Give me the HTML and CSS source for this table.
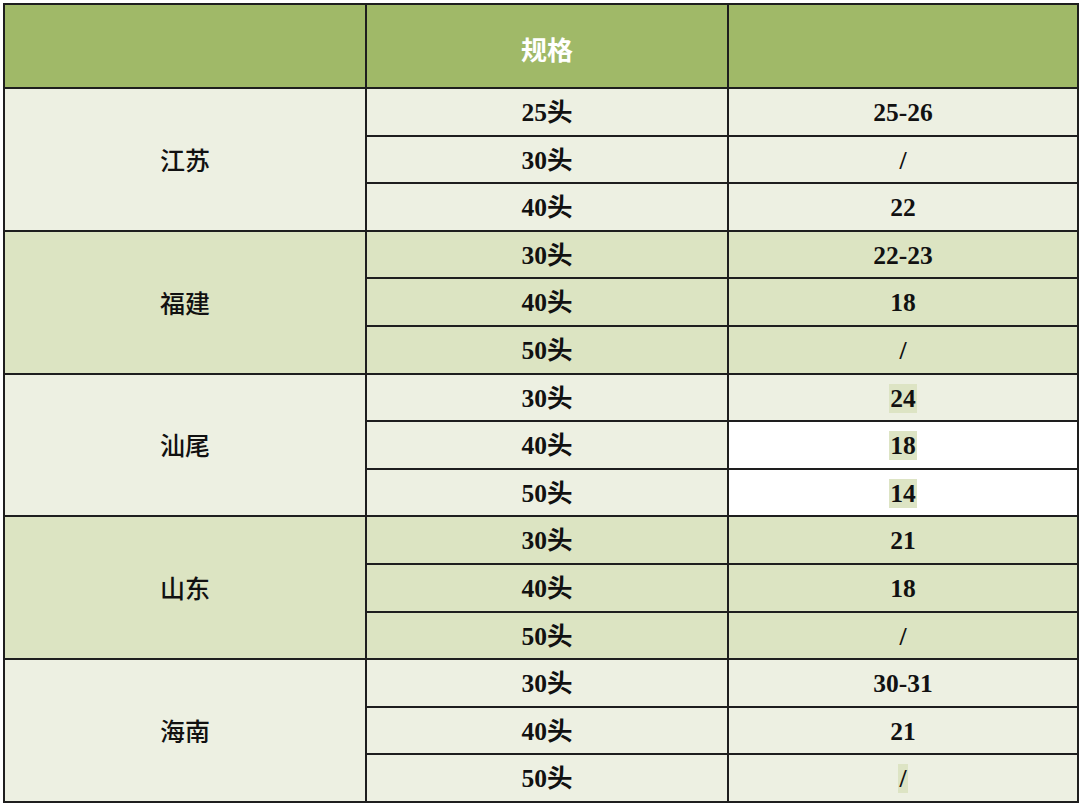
FILE: index.html
```html
<!DOCTYPE html>
<html lang="zh">
<head>
<meta charset="utf-8">
<link rel="stylesheet" href="styles.css">
</head>
<body>
<table class="spec">
  <colgroup><col class="c1"><col class="c2"><col class="c3"></colgroup>
  <thead>
    <tr class="head"><th></th><th>规格</th><th></th></tr>
  </thead>
  <tbody class="light">
    <tr><td rowspan="3" class="region">江苏</td><td>25头</td><td>25-26</td></tr>
    <tr><td>30头</td><td>/</td></tr>
    <tr><td>40头</td><td>22</td></tr>
  </tbody>
  <tbody class="dark">
    <tr><td rowspan="3" class="region">福建</td><td>30头</td><td>22-23</td></tr>
    <tr><td>40头</td><td>18</td></tr>
    <tr><td>50头</td><td>/</td></tr>
  </tbody>
  <tbody class="light">
    <tr><td rowspan="3" class="region">汕尾</td><td>30头</td><td><span class="hl">24</span></td></tr>
    <tr><td>40头</td><td class="white"><span class="hl">18</span></td></tr>
    <tr><td>50头</td><td class="white"><span class="hl">14</span></td></tr>
  </tbody>
  <tbody class="dark">
    <tr><td rowspan="3" class="region">山东</td><td>30头</td><td>21</td></tr>
    <tr><td>40头</td><td>18</td></tr>
    <tr><td>50头</td><td>/</td></tr>
  </tbody>
  <tbody class="light">
    <tr><td rowspan="3" class="region">海南</td><td>30头</td><td>30-31</td></tr>
    <tr><td>40头</td><td>21</td></tr>
    <tr><td>50头</td><td><span class="hl">/</span></td></tr>
  </tbody>
</table>
</body>
</html>
```
FILE: styles.css
```css
html, body {
  margin: 0;
  padding: 0;
  background: #ffffff;
}

.spec {
  margin: 3px 0 0 3px;
  width: 1074px;
  border-collapse: collapse;
  table-layout: fixed;
  font-family: "Liberation Serif", "Noto Sans CJK SC", serif;
  font-weight: bold;
  font-size: 25.5px;
  color: #111;
}

.c1 { width: 362px; }
.c2 { width: 362px; }
.c3 { width: 350px; }

.spec th,
.spec td {
  border: 2px solid #1e1e1e;
  padding: 2px 0 0;
  text-align: center;
  vertical-align: middle;
  height: 43.6px;
  line-height: 1;
}

.head th {
  height: 77px;
  padding-top: 5px;
  background: #a0b968;
  color: #ffffff;
  font-family: "Noto Sans CJK SC", sans-serif;
  font-weight: bold;
  font-size: 26px;
}

.light td { background: #edf0e2; }
.dark td { background: #dce4c2; }
.light td.white { background: #ffffff; }

.spec td.region {
  padding-top: 0;
  font-family: "Noto Sans CJK SC", serif;
  font-weight: 500;
  font-size: 25px;
}

.hl {
  background: #dde4c4;
  padding: 0 1px;
}
```
